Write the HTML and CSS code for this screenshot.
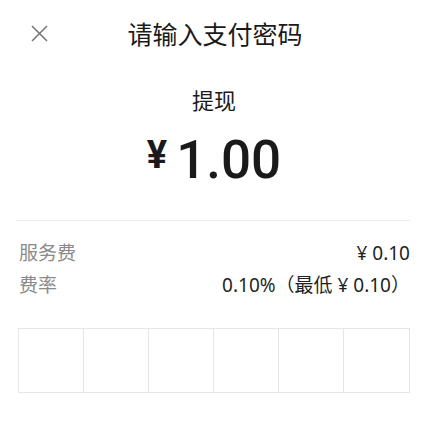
FILE: index.html
```html
<!DOCTYPE html>
<html lang="zh-CN">
<head>
    <meta charset="UTF-8">
    <meta name="viewport" content="width=device-width, initial-scale=1.0">
    <title>请输入支付密码</title>
    <link rel="stylesheet" href="styles.css">
</head>
<body>
    <div class="sheet">
        <div class="header">
            <button class="close" aria-label="关闭">
                <svg width="17" height="17" viewBox="0 0 17 17">
                    <path d="M1 1 L16 16 M16 1 L1 16" stroke="#737373" stroke-width="1.5" fill="none"/>
                </svg>
            </button>
            <h1>请输入支付密码</h1>
            <span></span>
        </div>

        <div class="content">
            <p class="type">提现</p>
            <div class="amount">
                <span class="currency">¥</span>
                <span class="value">1.00</span>
            </div>

            <div class="divider"></div>

            <div class="row">
                <span class="label">服务费</span>
                <span class="num">¥ 0.10</span>
            </div>
            <div class="row">
                <span class="label">费率</span>
                <span class="num">0.10%（最低 ¥ 0.10）</span>
            </div>

            <div class="pin">
                <div class="cell"></div>
                <div class="cell"></div>
                <div class="cell"></div>
                <div class="cell"></div>
                <div class="cell"></div>
                <div class="cell"></div>
            </div>
        </div>
    </div>
</body>
</html>
```

FILE: styles.css
```css
body {
    margin: 0;
    padding: 0;
    background: #fff;
    font-family: "Noto Sans", "Noto Sans CJK SC", sans-serif;
    color: #1c1c1c;
}
.sheet {
    width: 430px;
    height: 424px;
    background: #fff;
}
.header {
    height: 66px;
    display: grid;
    grid-template-columns: 78px 1fr 78px;
    align-items: center;
}
.close {
    width: 78px;
    height: 66px;
    border: none;
    background: none;
    padding: 0;
    display: flex;
    align-items: center;
    justify-content: center;
    cursor: pointer;
}
.header h1 {
    margin: 0;
    text-align: center;
    font-family: "Noto Sans CJK SC", sans-serif;
    font-size: 25px;
    font-weight: 400;
    line-height: 32px;
    color: #1a1a1a;
}
.content {
    padding: 0 20px 0 18px;
}
.type {
    margin: 18px 0 0;
    text-align: center;
    font-family: "Noto Sans CJK SC", sans-serif;
    font-size: 22px;
    line-height: 30px;
    color: #1a1a1a;
}
.amount {
    margin-top: 19px;
    display: flex;
    justify-content: center;
    align-items: flex-start;
    font-family: Roboto, sans-serif;
    color: #1a1a1a;
}
.currency {
    font-size: 38px;
    font-weight: 700;
    line-height: 38px;
    margin-top: 3px;
    margin-right: 9px;
}
.value {
    font-size: 53px;
    font-weight: 500;
    line-height: 54px;
}
.divider {
    margin: 33px 0 0 -2px;
    height: 1px;
    background: #ececec;
}
.row {
    display: flex;
    justify-content: space-between;
    font-size: 19px;
    line-height: 32px;
}
.divider + .row {
    margin-top: 16px;
}
.label {
    color: #8a8a8a;
    padding-left: 1px;
}
.num {
    color: #1f1f1f;
}
.pin {
    margin-top: 27px;
    height: 65px;
    display: grid;
    grid-template-columns: repeat(6, 1fr);
    border: 1px solid #e6e6e6;
    box-sizing: border-box;
}
.cell {
    border-right: 1px solid #e6e6e6;
}
.cell:last-child {
    border-right: none;
}
```
